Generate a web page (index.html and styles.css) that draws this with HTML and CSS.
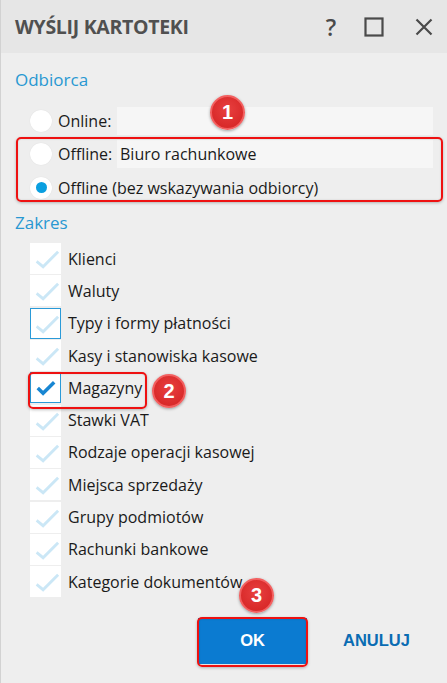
FILE: index.html
```html
<!DOCTYPE html>
<html lang="pl">
<head>
<meta charset="utf-8">
<title>Wyślij kartoteki</title>
<link rel="stylesheet" href="styles.css">
</head>
<body>
<div class="window">
  <header class="titlebar">
    <h1 class="title">WYŚLIJ KARTOTEKI</h1>
    <div class="controls">
      <span class="ctl help">?</span>
      <svg class="ctl" width="20" height="20" viewBox="0 0 20 20"><rect x="1.5" y="1.5" width="17" height="17" fill="none" stroke="#4a4a4a" stroke-width="2.2"/></svg>
      <svg class="ctl" width="18" height="18" viewBox="0 0 18 18"><path d="M1.5 1.5 L16.5 16.5 M16.5 1.5 L1.5 16.5" stroke="#4a4a4a" stroke-width="2.2" fill="none"/></svg>
    </div>
  </header>
  <main class="content">
    <h2 class="section">Odbiorca</h2>
    <div class="radios">
      <div class="radio-row">
        <span class="radio"></span>
        <span class="rlabel">Online:</span>
        <span class="field"></span>
      </div>
      <div class="radio-row">
        <span class="radio"></span>
        <span class="rlabel">Offline:</span>
        <span class="field">Biuro rachunkowe</span>
      </div>
      <div class="radio-row">
        <span class="radio on"></span>
        <span class="rlabel wide">Offline (bez wskazywania odbiorcy)</span>
      </div>
    </div>
    <h2 class="section zakres">Zakres</h2>
    <ul class="checks">
      <li class="item"><span class="box"><svg viewBox="0 0 30 30"><path class="ck" d="M7 19 L12.5 23.5 L27 9"/></svg></span>Klienci</li>
      <li class="item"><span class="box"><svg viewBox="0 0 30 30"><path class="ck" d="M7 19 L12.5 23.5 L27 9"/></svg></span>Waluty</li>
      <li class="item"><span class="box focus"><svg viewBox="0 0 30 30"><path class="ck" d="M7 19 L12.5 23.5 L27 9"/></svg></span>Typy i formy płatności</li>
      <li class="item"><span class="box"><svg viewBox="0 0 30 30"><path class="ck" d="M7 19 L12.5 23.5 L27 9"/></svg></span>Kasy i stanowiska kasowe</li>
      <li class="item"><span class="box focus"><svg viewBox="0 0 30 30"><path class="ck on" d="M7 15.5 L12.5 21 L24 9.5"/></svg></span>Magazyny</li>
      <li class="item"><span class="box"><svg viewBox="0 0 30 30"><path class="ck" d="M7 19 L12.5 23.5 L27 9"/></svg></span>Stawki VAT</li>
      <li class="item"><span class="box"><svg viewBox="0 0 30 30"><path class="ck" d="M7 19 L12.5 23.5 L27 9"/></svg></span>Rodzaje operacji kasowej</li>
      <li class="item"><span class="box"><svg viewBox="0 0 30 30"><path class="ck" d="M7 19 L12.5 23.5 L27 9"/></svg></span>Miejsca sprzedaży</li>
      <li class="item"><span class="box"><svg viewBox="0 0 30 30"><path class="ck" d="M7 19 L12.5 23.5 L27 9"/></svg></span>Grupy podmiotów</li>
      <li class="item"><span class="box"><svg viewBox="0 0 30 30"><path class="ck" d="M7 19 L12.5 23.5 L27 9"/></svg></span>Rachunki bankowe</li>
      <li class="item"><span class="box"><svg viewBox="0 0 30 30"><path class="ck" d="M7 19 L12.5 23.5 L27 9"/></svg></span>Kategorie dokumentów</li>
    </ul>
    <div class="buttons">
      <button class="btn ok">OK</button>
      <button class="btn cancel">ANULUJ</button>
    </div>
  </main>

  <div class="mark mark1"></div>
  <div class="mark mark2"></div>
  <div class="mark mark3"></div>
  <span class="badge b1">1</span>
  <span class="badge b2">2</span>
  <span class="badge b3">3</span>
</div>
</body>
</html>
```

FILE: styles.css
```css
* { box-sizing: border-box; }
html, body { margin: 0; padding: 0; }
body {
  font-family: "Open Sans", "Noto Sans", "Liberation Sans", sans-serif;
  background: #eeeeee;
  color: #1a1a1a;
}
.window {
  position: relative;
  width: 447px;
  height: 683px;
  background: #eeeeee;
  border-left: 1px solid #d2d2d2;
  overflow: hidden;
}
.titlebar {
  height: 53px;
  background: #e6e6e6;
  display: flex;
  align-items: center;
  justify-content: space-between;
  padding: 0 14px 0 14px;
}
.title {
  margin: 0;
  font-size: 19.5px;
  font-weight: 700;
  color: #505050;
  letter-spacing: -0.3px;
}
.controls {
  display: flex;
  align-items: center;
}
.ctl { display: block; }
.help {
  font-size: 23px;
  font-weight: 600;
  color: #4a4a4a;
  width: 16px;
  text-align: center;
  line-height: 24px;
  margin-right: 25px;
}
.controls svg:nth-of-type(1) { margin-right: 31px; }
.content {
  padding: 16px 14px 0 14px;
}
.section {
  margin: 0;
  font-size: 17px;
  font-weight: 400;
  color: #2898d2;
  line-height: 22px;
}
.radios {
  margin-top: 13px;
  padding-left: 15px;
}
.radio-row {
  display: grid;
  grid-template-columns: 28px 59px 1fr;
  align-items: center;
  height: 33.5px;
  font-size: 16px;
}
.radio {
  width: 22px;
  height: 22px;
  border-radius: 50%;
  background: #ffffff;
  box-shadow: 0 0 1px rgba(0,0,0,0.12);
  display: flex;
  align-items: center;
  justify-content: center;
}
.radio.on::after {
  content: "";
  width: 11px;
  height: 11px;
  border-radius: 50%;
  background: #0a9fe0;
}
.rlabel { white-space: nowrap; }
.rlabel.wide { grid-column: 2 / 4; }
.field {
  height: 28px;
  background: #f6f6f6;
  display: flex;
  align-items: center;
  padding-left: 3px;
}
.zakres { margin-top: 7px; }
.checks {
  list-style: none;
  margin: 9px 0 0 0;
  padding: 0 0 0 15px;
}
.item {
  height: 32.3px;
  display: flex;
  align-items: center;
  gap: 7px;
  font-size: 16px;
}
.box {
  width: 31px;
  height: 31px;
  background: #ffffff;
  border: 1px solid #ffffff;
  display: block;
  flex: none;
}
.box.focus { border-color: #2a9ad8; }
.box svg { display: block; width: 29px; height: 29px; }
.ck {
  fill: none;
  stroke: #cbe7f6;
  stroke-width: 3;
  stroke-linecap: square;
}
.ck.on {
  stroke: #1886d2;
  stroke-width: 3.6;
  stroke-linecap: butt;
}
.buttons {
  display: flex;
  align-items: center;
  margin-top: 20px;
  padding-left: 183px;
  gap: 36px;
}
.btn {
  font-family: "Liberation Sans", "Open Sans", sans-serif;
  font-weight: 700;
  border: none;
  font-size: 16.5px;
}
.ok {
  width: 109px;
  height: 46px;
  background: #0b7bd1;
  color: #ffffff;
}
.cancel {
  background: transparent;
  color: #0a6cb3;
  padding: 0;
}
.mark {
  position: absolute;
  border: 2px solid #ee1111;
  border-radius: 5px;
  box-shadow: 0 1px 3px rgba(0,0,0,0.25), inset 0 0 2px rgba(0,0,0,0.15);
}
.mark1 { left: 15px; top: 137px; width: 427px; height: 65px; }
.mark2 { left: 27px; top: 372px; width: 119px; height: 37px; }
.mark3 { left: 196px; top: 617px; width: 111px; height: 50px; }
.badge {
  position: absolute;
  width: 35px;
  height: 35px;
  border-radius: 50%;
  background: radial-gradient(circle at 50% 40%, #e84040 0%, #d92a2a 70%);
  border: 2px solid #f26060;
  box-shadow: 0 1px 3px rgba(0,0,0,0.35);
  color: #ffffff;
  font-family: "Liberation Sans", sans-serif;
  font-weight: 700;
  font-size: 20px;
  display: flex;
  align-items: center;
  justify-content: center;
}
.b1 { left: 209px; top: 95px; }
.b2 { left: 151px; top: 374px; width: 34px; height: 34px; }
.b3 { left: 238px; top: 578px; }
```
